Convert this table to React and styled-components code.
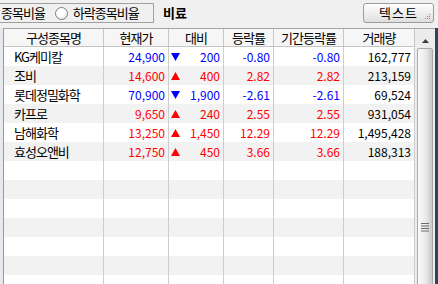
import React from 'react';
import styled, { createGlobalStyle } from 'styled-components';

const Global = createGlobalStyle`
  html, body { margin: 0; padding: 0; background: #f0f0f0; }
  body {
    font-family: "Noto Sans CJK KR", "Noto Sans", sans-serif;
    font-size: 12px;
    color: #000;
  }
`;

const Frame = styled.div`
  width: 438px;
  height: 284px;
  overflow: hidden;
  display: flex;
  flex-direction: column;
  background: #f0f0f0;
`;

const TopBar = styled.div`
  height: 28px;
  flex: none;
  box-sizing: border-box;
  padding-top: 3px;
  display: flex;
  align-items: flex-start;
`;

const RadioGroup = styled.div`
  width: 154px;
  height: 20px;
  box-sizing: border-box;
  border: 1px solid #a0a0a0;
  border-left: none;
  display: flex;
  align-items: center;
  padding-left: 1px;
  line-height: 18px;
`;

const HangulText = styled.span`
  font-size: 13px;
  letter-spacing: -1px;
  white-space: nowrap;
`;

const Radio = styled.span`
  width: 13px;
  height: 13px;
  box-sizing: border-box;
  border-radius: 50%;
  border: 1px solid #7f7f7f;
  background: radial-gradient(circle at 40% 35%, #ffffff 40%, #dcdcdc 100%);
  margin: 0 5px 0 ${p => p.$gap}px;
  flex: none;
`;

const Title = styled.span`
  margin-left: 9px;
  font-weight: bold;
  font-size: 13px;
  line-height: 20px;
`;

const Button = styled.button`
  position: relative;
  margin-left: auto;
  margin-right: 4px;
  width: 71px;
  height: 20px;
  padding: 0;
  box-sizing: border-box;
  border: 1px solid #9c9c9c;
  border-radius: 3px;
  background: linear-gradient(#fefefe, #ececec 60%, #dedede);
  font-family: inherit;
  font-size: 13px;
  letter-spacing: 1px;
  color: #000;
  line-height: 18px;
`;

const Grip = styled.svg`
  position: absolute;
  right: 2px;
  bottom: 2px;
`;

const Main = styled.div`
  flex: 1;
  display: flex;
  padding-left: 3px;
  background: #e6e9ee;
  min-height: 0;
`;

const Table = styled.div`
  width: 412px;
  flex: none;
  box-sizing: border-box;
  border-left: 1px solid #8e9aab;
  border-top: 1px solid #a6a6a6;
  display: flex;
  flex-direction: column;
  background: #fff;
`;

const cols = '100px 65px 55px 50px 70px 71px';

const HeaderRow = styled.div`
  display: grid;
  grid-template-columns: ${cols};
  height: 18px;
  box-sizing: border-box;
  border-bottom: 1px solid #c4c4c4;
  background: #f6f6f6;
  flex: none;
`;

const HeadCell = styled.div`
  border-right: 1px solid #c8c8c8;
  text-align: center;
  line-height: 17px;
  font-size: 13px;
  letter-spacing: -1px;
  white-space: nowrap;
  overflow: hidden;
`;

const Row = styled.div`
  display: grid;
  grid-template-columns: ${cols};
  height: 19px;
  flex: none;
  background: ${p => (p.$shaded ? '#f2f2f2' : '#ffffff')};
`;

const Cell = styled.div`
  border-right: 1px solid #cdcdcd;
  line-height: 19px;
  white-space: nowrap;
  overflow: hidden;
  color: ${p => p.$color || '#000'};
  text-align: ${p => (p.$left ? 'left' : 'right')};
  padding: ${p => (p.$left ? '0 0 0 10px' : '0 3px 0 0')};
  font-size: ${p => (p.$left ? '13px' : '12px')};
  letter-spacing: ${p => (p.$left ? '-1px' : '0')};
`;

const DiffCell = styled(Cell)`
  display: flex;
  align-items: center;
  justify-content: space-between;
  padding-left: 2px;
`;

const Scroll = styled.div`
  width: 20px;
  flex: none;
  box-sizing: border-box;
  border-top: 1px solid #a6a6a6;
  background: #ececec;
  display: flex;
  flex-direction: column;
`;

const ScrollUp = styled.div`
  height: 18px;
  flex: none;
  display: flex;
  align-items: flex-end;
  justify-content: center;
  padding-bottom: 4px;
  box-sizing: border-box;
`;

const Thumb = styled.div`
  height: 358px;
  flex: none;
  margin: 1px 2px 0 2px;
  box-sizing: border-box;
  border: 1px solid #a9a9a9;
  border-radius: 2px;
  background: linear-gradient(to right, #fafafa, #eaeaea 55%, #c9c9c9);
  display: flex;
  align-items: center;
  justify-content: center;
`;

const Edge = styled.div`
  width: 3px;
  flex: none;
  background: #34425c;
`;

const Tri = ({ up, color }) => (
  <svg width="9" height="8" viewBox="0 0 9 8">
    {up ? (
      <polygon points="4.5,0 9,8 0,8" fill={color} />
    ) : (
      <polygon points="0,0 9,0 4.5,8" fill={color} />
    )}
  </svg>
);

const BLUE = '#0000ff';
const RED = '#ff0000';

const data = [
  { name: 'KG케미칼', price: '24,900', up: false, diff: '200', rate: '-0.80', prate: '-0.80', vol: '162,777' },
  { name: '조비', price: '14,600', up: true, diff: '400', rate: '2.82', prate: '2.82', vol: '213,159' },
  { name: '롯데정밀화학', price: '70,900', up: false, diff: '1,900', rate: '-2.61', prate: '-2.61', vol: '69,524' },
  { name: '카프로', price: '9,650', up: true, diff: '240', rate: '2.55', prate: '2.55', vol: '931,054' },
  { name: '남해화학', price: '13,250', up: true, diff: '1,450', rate: '12.29', prate: '12.29', vol: '1,495,428' },
  { name: '효성오앤비', price: '12,750', up: true, diff: '450', rate: '3.66', prate: '3.66', vol: '188,313' },
];

const headers = ['구성종목명', '현재가', '대비', '등락률', '기간등락률', '거래량'];

export default function App() {
  const rows = [];
  for (let i = 0; i < 14; i++) {
    const d = data[i];
    if (d) {
      const c = d.up ? RED : BLUE;
      rows.push(
        <Row key={i} $shaded={i % 2 === 1}>
          <Cell $left>{d.name}</Cell>
          <Cell $color={c}>{d.price}</Cell>
          <DiffCell $color={c}>
            <Tri up={d.up} color={c} />
            <span>{d.diff}</span>
          </DiffCell>
          <Cell $color={c}>{d.rate}</Cell>
          <Cell $color={c}>{d.prate}</Cell>
          <Cell>{d.vol}</Cell>
        </Row>
      );
    } else {
      rows.push(
        <Row key={i} $shaded={i % 2 === 1}>
          <Cell />
          <Cell />
          <Cell />
          <Cell />
          <Cell />
          <Cell />
        </Row>
      );
    }
  }

  return (
    <>
      <Global />
      <Frame>
        <TopBar>
          <RadioGroup>
            <HangulText>종목비율</HangulText>
            <Radio $gap={10} />
            <HangulText>하락종목비율</HangulText>
          </RadioGroup>
          <Title>비료</Title>
          <Button>
            텍스트
            <Grip width="6" height="6" viewBox="0 0 6 6">
              <rect x="4" y="0" width="1" height="1" fill="#8a8a8a" />
              <rect x="2" y="2" width="1" height="1" fill="#8a8a8a" />
              <rect x="4" y="2" width="1" height="1" fill="#8a8a8a" />
              <rect x="0" y="4" width="1" height="1" fill="#8a8a8a" />
              <rect x="2" y="4" width="1" height="1" fill="#8a8a8a" />
              <rect x="4" y="4" width="1" height="1" fill="#8a8a8a" />
            </Grip>
          </Button>
        </TopBar>
        <Main>
          <Table>
            <HeaderRow>
              {headers.map(h => (
                <HeadCell key={h}>{h}</HeadCell>
              ))}
            </HeaderRow>
            {rows}
          </Table>
          <Scroll>
            <ScrollUp>
              <svg width="7" height="4" viewBox="0 0 7 4">
                <polygon points="3.5,0 7,4 0,4" fill="#3c3c3c" />
              </svg>
            </ScrollUp>
            <Thumb>
              <svg width="8" height="9" viewBox="0 0 8 9">
                {[0, 2.5, 5, 7.5].map(y => (
                  <rect key={y} x="0" y={y} width="8" height="1" fill="#6a6a6a" />
                ))}
              </svg>
            </Thumb>
          </Scroll>
          <Edge />
        </Main>
      </Frame>
    </>
  );
}
